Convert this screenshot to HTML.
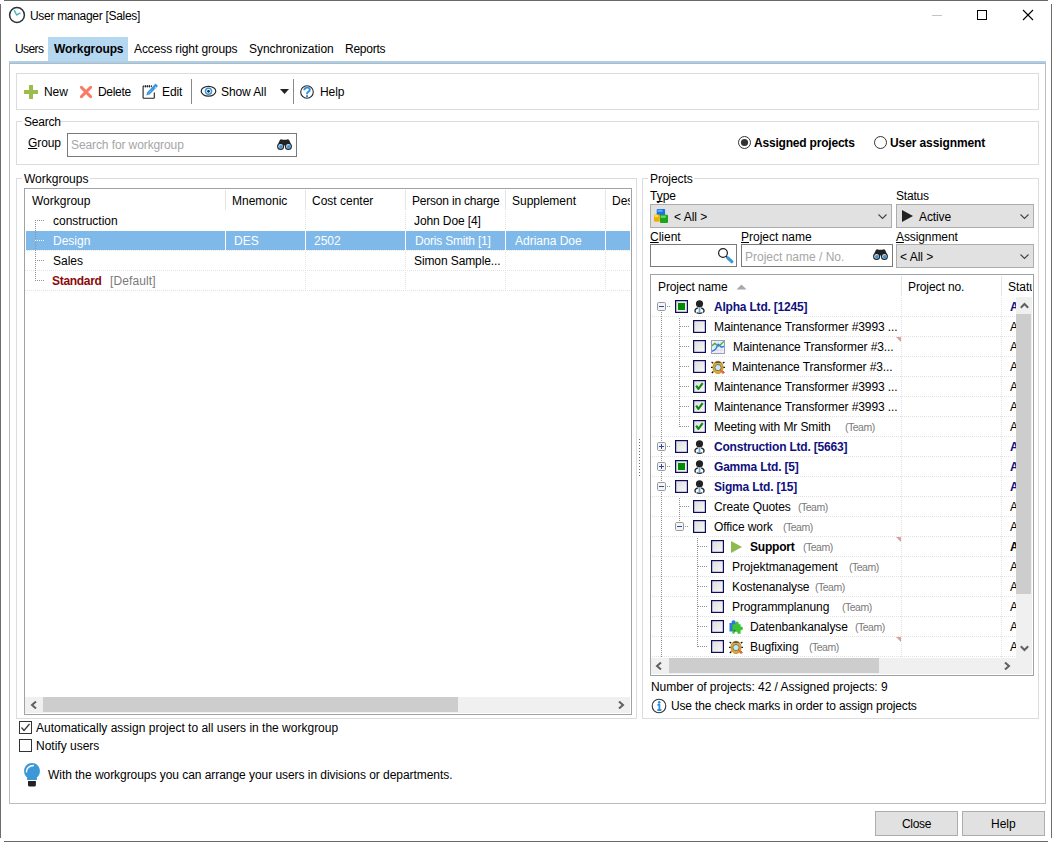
<!DOCTYPE html><html><head><meta charset="utf-8"><style>
html,body{margin:0;padding:0;width:1052px;height:842px;overflow:hidden;background:#fff;}
.t{position:absolute;font-family:"Liberation Sans",sans-serif;font-size:12px;line-height:14px;white-space:nowrap;color:#000;}
.b{font-weight:bold;}
.u{text-decoration:underline;text-decoration-skip-ink:none;}
</style></head><body>
<div style="position:absolute;left:4px;top:0px;width:1044px;height:1px;background:#686868"></div>
<div style="position:absolute;left:0px;top:4px;width:1px;height:834px;background:#6c6c6c"></div>
<div style="position:absolute;left:1051px;top:4px;width:1px;height:834px;background:#6c6c6c"></div>
<div style="position:absolute;left:4px;top:841px;width:1044px;height:1px;background:#686868"></div>
<svg style="position:absolute;left:8px;top:6px" width="18" height="18" viewBox="0 0 18 18"><circle cx="9" cy="9" r="7.4" fill="none" stroke="#263238" stroke-width="1.5"/><path d="M6.2 4.2 L8.6 9 L12.4 6.8" fill="none" stroke="#4db6bc" stroke-width="1.5" stroke-linejoin="round"/></svg>
<div class="t" style="left:30px;top:9px;letter-spacing:-0.3px">User manager [Sales]</div>
<div style="position:absolute;left:932px;top:15px;width:10px;height:1px;background:#c4c4c4"></div>
<div style="position:absolute;left:977px;top:10px;width:8px;height:8px;border:1px solid #000"></div>
<svg style="position:absolute;left:1022px;top:9px" width="12" height="12" viewBox="0 0 12 12"><path d="M1 1 L11 11 M11 1 L1 11" stroke="#000" stroke-width="1.1"/></svg>
<div style="position:absolute;left:48px;top:37px;width:80px;height:24px;background:#b5d7f0"></div>
<div style="position:absolute;left:9px;top:61px;width:1037px;height:2px;background:#a8d1ef"></div>
<div class="t" style="left:15px;top:42px;letter-spacing:-0.6px">Users</div>
<div class="t" style="left:54px;top:42px;font-weight:bold;letter-spacing:-0.1px">Workgroups</div>
<div class="t" style="left:134px;top:42px;letter-spacing:-0.1px">Access right groups</div>
<div class="t" style="left:249px;top:42px;letter-spacing:-0.05px">Synchronization</div>
<div class="t" style="left:345px;top:42px;letter-spacing:-0.25px">Reports</div>
<div style="position:absolute;left:9px;top:63px;width:1035px;height:739px;border:1px solid #bcbcbc;border-top-color:#b8b8b8"></div>
<div style="position:absolute;left:16px;top:73px;width:1021px;height:35px;border:1px solid #dcdcdc"></div>
<svg style="position:absolute;left:24px;top:85px" width="14" height="14" viewBox="0 0 14 14"><rect x="5" y="0" width="4" height="14" fill="#9cbc4c"/><rect x="0" y="5" width="14" height="4" fill="#9cbc4c"/></svg>
<div class="t" style="left:44px;top:85px;letter-spacing:-0.1px">New</div>
<svg style="position:absolute;left:79px;top:85px" width="14" height="14" viewBox="0 0 14 14"><path d="M2.4 2.4 L11.6 11.6 M11.6 2.4 L2.4 11.6" stroke="#fb7864" stroke-width="2.9" stroke-linecap="round"/></svg>
<div class="t" style="left:98px;top:85px;letter-spacing:-0.3px">Delete</div>
<svg style="position:absolute;left:142px;top:83px" width="17" height="17" viewBox="0 0 17 17"><path d="M12.3 9.5 V14.7 Q12.3 15.2 11.8 15.2 H1.6 Q1.1 15.2 1.1 14.7 V3.6 Q1.1 3.1 1.6 3.1 H2" fill="none" stroke="#222" stroke-width="1.1"/><ellipse cx="3.3" cy="3.2" rx="0.75" ry="1.3" fill="#222"/><ellipse cx="5.3" cy="3.2" rx="0.75" ry="1.3" fill="#222"/><ellipse cx="7.4" cy="3.2" rx="0.75" ry="1.3" fill="#222"/><ellipse cx="9.4" cy="3.2" rx="0.6" ry="1" fill="#222"/><path d="M4.3 12.5 L7.61 11.55 L16.0 2.99 L13.59 0.61 L5.19 9.17 Z" fill="#3a95dd"/><path d="M12.6 5.2 L14 3.8" stroke="#fff" stroke-width="0.8"/><path d="M6.5 10.3 L10.5 6.2" stroke="#bfe0f7" stroke-width="0.7" stroke-dasharray="1 1"/></svg>
<div class="t" style="left:162px;top:85px;letter-spacing:-0.1px">Edit</div>
<div style="position:absolute;left:191px;top:79px;width:1px;height:25px;background:#8a8a8a"></div>
<svg style="position:absolute;left:200px;top:85px" width="17" height="13" viewBox="0 0 17 13"><ellipse cx="8.5" cy="6.3" rx="7.3" ry="4.9" fill="#fff" stroke="#262626" stroke-width="1.2"/><circle cx="8.5" cy="6.3" r="3.05" fill="none" stroke="#3a95dd" stroke-width="1.5"/><circle cx="8.5" cy="6.3" r="1.35" fill="#222"/></svg>
<div class="t" style="left:221px;top:85px;letter-spacing:-0.1px">Show All</div>
<svg style="position:absolute;left:280px;top:89px" width="9" height="5" viewBox="0 0 9 5"><path d="M0 0 H9 L4.5 5 Z" fill="#222"/></svg>
<div style="position:absolute;left:293px;top:79px;width:1px;height:25px;background:#8a8a8a"></div>
<svg style="position:absolute;left:299px;top:84px" width="16" height="16" viewBox="0 0 16 16"><circle cx="8" cy="8" r="6.3" fill="#fff" stroke="#262626" stroke-width="1.1"/><path d="M5.3 6.3 Q5.3 3.6 8.1 3.6 Q10.8 3.6 10.8 5.7 Q10.8 7.1 9.2 7.9 Q8 8.5 8 10.2" fill="none" stroke="#2f8fdc" stroke-width="1.9"/><rect x="7" y="11.2" width="2" height="2" fill="#2f8fdc"/></svg>
<div class="t" style="left:320px;top:85px;letter-spacing:-0.1px">Help</div>
<div style="position:absolute;left:16px;top:121px;width:1021px;height:42px;border:1px solid #dcdcdc"></div>
<div style="position:absolute;left:22px;top:115px;width:38px;height:12px;background:#fff"></div>
<div class="t" style="left:24px;top:115px;letter-spacing:-0.2px">Search</div>
<div class="t" style="left:28px;top:136px;letter-spacing:-0.1px"><span class="u">G</span>roup</div>
<div style="position:absolute;left:67px;top:133px;width:228px;height:22px;border:1px solid #7a7a7a;background:#fff"></div>
<div class="t" style="left:71px;top:138px;color:#a6a6a6;letter-spacing:-0.1px">Search for workgroup</div>
<svg style="position:absolute;left:277px;top:139px" width="15" height="11" viewBox="0 0 15 11"><path d="M3 0.8 Q4.3 -0.1 5.6 0.8 L9.4 0.8 Q10.7 -0.1 12 0.8 L14.6 6.5 L0.4 6.5 Z" fill="#222"/><circle cx="3.6" cy="7.4" r="3.5" fill="#222"/><circle cx="11.4" cy="7.4" r="3.5" fill="#222"/><circle cx="3.6" cy="7.4" r="2.4" fill="#c4e2f6"/><circle cx="11.4" cy="7.4" r="2.4" fill="#c4e2f6"/><circle cx="3.9" cy="7.7" r="1.8" fill="#3a95dd"/><circle cx="11.7" cy="7.7" r="1.8" fill="#3a95dd"/></svg>
<svg style="position:absolute;left:737px;top:135px" width="15" height="15" viewBox="0 0 15 15"><circle cx="7.5" cy="7.5" r="6" fill="#fff" stroke="#333" stroke-width="1"/><circle cx="7.5" cy="7.5" r="3.6" fill="#333"/></svg>
<div class="t" style="left:754px;top:136px;font-weight:bold;letter-spacing:-0.2px">Assigned projects</div>
<svg style="position:absolute;left:873px;top:135px" width="15" height="15" viewBox="0 0 15 15"><circle cx="7.5" cy="7.5" r="6" fill="#fff" stroke="#333" stroke-width="1"/></svg>
<div class="t" style="left:890px;top:136px;font-weight:bold;letter-spacing:-0.1px">User assignment</div>
<div style="position:absolute;left:16px;top:178px;width:619px;height:539px;border:1px solid #dcdcdc"></div>
<div style="position:absolute;left:22px;top:172px;width:68px;height:12px;background:#fff"></div>
<div class="t" style="left:24px;top:172px;">Workgroups</div>
<div style="position:absolute;left:24px;top:188px;width:606px;height:525px;border:1px solid #9ea2a9"></div>
<div style="position:absolute;left:225px;top:190px;width:1px;height:20px;background:#e5e5e5"></div>
<div style="position:absolute;left:305px;top:190px;width:1px;height:20px;background:#e5e5e5"></div>
<div style="position:absolute;left:405px;top:190px;width:1px;height:20px;background:#e5e5e5"></div>
<div style="position:absolute;left:505px;top:190px;width:1px;height:20px;background:#e5e5e5"></div>
<div style="position:absolute;left:605px;top:190px;width:1px;height:20px;background:#e5e5e5"></div>
<div class="t" style="left:32px;top:194px;">Workgroup</div>
<div class="t" style="left:232px;top:194px;">Mnemonic</div>
<div class="t" style="left:312px;top:194px;">Cost center</div>
<div class="t" style="left:412px;top:194px;letter-spacing:-0.2px">Person in charge</div>
<div class="t" style="left:512px;top:194px;">Supplement</div>
<div style="position:absolute;left:612px;top:194px;width:18px;overflow:hidden;height:16px"><div class="t" style="left:0;top:0">Description</div></div>
<div style="position:absolute;left:25px;top:250px;width:605px;height:1px;background-image:linear-gradient(90deg,#e3e3e3 50%,transparent 50%);background-size:2px 1px"></div>
<div style="position:absolute;left:25px;top:270px;width:605px;height:1px;background-image:linear-gradient(90deg,#e3e3e3 50%,transparent 50%);background-size:2px 1px"></div>
<div style="position:absolute;left:25px;top:290px;width:605px;height:1px;background-image:linear-gradient(90deg,#e3e3e3 50%,transparent 50%);background-size:2px 1px"></div>
<div style="position:absolute;left:305px;top:212px;width:1px;height:79px;background-image:linear-gradient(180deg,#e3e3e3 50%,transparent 50%);background-size:1px 2px"></div>
<div style="position:absolute;left:405px;top:212px;width:1px;height:79px;background-image:linear-gradient(180deg,#e3e3e3 50%,transparent 50%);background-size:1px 2px"></div>
<div style="position:absolute;left:505px;top:212px;width:1px;height:79px;background-image:linear-gradient(180deg,#e3e3e3 50%,transparent 50%);background-size:1px 2px"></div>
<div style="position:absolute;left:605px;top:212px;width:1px;height:79px;background-image:linear-gradient(180deg,#e3e3e3 50%,transparent 50%);background-size:1px 2px"></div>
<div style="position:absolute;left:26px;top:231px;width:604px;height:19px;background:#7eb9ea"></div>
<div style="position:absolute;left:225px;top:231px;width:1px;height:19px;background:#fff"></div>
<div style="position:absolute;left:305px;top:231px;width:1px;height:19px;background:#fff"></div>
<div style="position:absolute;left:405px;top:231px;width:1px;height:19px;background:#fff"></div>
<div style="position:absolute;left:505px;top:231px;width:1px;height:19px;background:#fff"></div>
<div style="position:absolute;left:605px;top:231px;width:1px;height:19px;background:#fff"></div>
<div style="position:absolute;left:35px;top:220px;width:1px;height:61px;background-image:linear-gradient(180deg,#929292 50%,transparent 50%);background-size:1px 2px"></div>
<div style="position:absolute;left:35px;top:220px;width:10px;height:1px;background-image:linear-gradient(90deg,#929292 50%,transparent 50%);background-size:2px 1px"></div>
<div style="position:absolute;left:35px;top:240px;width:10px;height:1px;background-image:linear-gradient(90deg,#fff 50%,transparent 50%);background-size:2px 1px"></div>
<div style="position:absolute;left:35px;top:260px;width:10px;height:1px;background-image:linear-gradient(90deg,#929292 50%,transparent 50%);background-size:2px 1px"></div>
<div style="position:absolute;left:35px;top:280px;width:10px;height:1px;background-image:linear-gradient(90deg,#929292 50%,transparent 50%);background-size:2px 1px"></div>
<div class="t" style="left:53px;top:214px;">construction</div>
<div class="t" style="left:53px;top:234px;color:#fff">Design</div>
<div class="t" style="left:53px;top:254px;">Sales</div>
<div class="t" style="left:52px;top:274px;font-weight:bold;color:#8b0a0a;letter-spacing:-0.3px">Standard</div>
<div class="t" style="left:110px;top:274px;color:#7a7a7a;letter-spacing:0.1px">[Default]</div>
<div class="t" style="left:234px;top:234px;color:#fff">DES</div>
<div class="t" style="left:314px;top:234px;color:#fff">2502</div>
<div class="t" style="left:414px;top:214px;letter-spacing:-0.1px">John Doe [4]</div>
<div class="t" style="left:415px;top:234px;color:#fff;letter-spacing:-0.2px">Doris Smith [1]</div>
<div class="t" style="left:414px;top:254px;letter-spacing:-0.1px">Simon Sample...</div>
<div class="t" style="left:515px;top:234px;color:#fff">Adriana Doe</div>
<div style="position:absolute;left:25px;top:697px;width:605px;height:16px;background:#f0f0f0"></div>
<div style="position:absolute;left:43px;top:697px;width:415px;height:15px;background:#cdcdcd"></div>
<svg style="position:absolute;left:30px;top:701px" width="8" height="8" viewBox="0 0 8 8"><path d="M6 0.5 L2 4 L6 7.5" fill="none" stroke="#606060" stroke-width="2"/></svg>
<svg style="position:absolute;left:617px;top:701px" width="8" height="8" viewBox="0 0 8 8"><path d="M2 0.5 L6 4 L2 7.5" fill="none" stroke="#606060" stroke-width="2"/></svg>
<svg style="position:absolute;left:19px;top:721px" width="13" height="13" viewBox="0 0 13 13"><rect x="0.5" y="0.5" width="12" height="12" fill="#fff" stroke="#333"/><path d="M2.5 6.5 L5 9.5 L10.5 3" fill="none" stroke="#333" stroke-width="1.2"/></svg>
<div class="t" style="left:36px;top:721px;">Automatically assign project to all users in the workgroup</div>
<svg style="position:absolute;left:19px;top:739px" width="13" height="13" viewBox="0 0 13 13"><rect x="0.5" y="0.5" width="12" height="12" fill="#fff" stroke="#333"/></svg>
<div class="t" style="left:36px;top:739px;">Notify users</div>
<svg style="position:absolute;left:23px;top:762px" width="18" height="26" viewBox="0 0 18 26"><path d="M4.1 18 L4.1 15.6 C2.2 14 1.1 11.6 1.1 9 C1.1 4.6 4.6 1.1 9 1.1 C13.4 1.1 16.9 4.6 16.9 9 C16.9 11.6 15.8 14 13.9 15.6 L13.9 18 Z" fill="#3d98d8"/><path d="M3.4 10.4 C3.1 6.6 6 3.4 10.9 3.4" fill="none" stroke="#fff" stroke-width="1.5"/><path d="M5 19 H12.9 V23 Q12.9 24.6 11.3 24.6 H6.6 Q5 24.6 5 23 Z" fill="#222"/></svg>
<div class="t" style="left:48px;top:768px;letter-spacing:-0.05px">With the workgroups you can arrange your users in divisions or departments.</div>
<div style="position:absolute;left:875px;top:811px;width:81px;height:23px;background:#e1e1e1;border:1px solid #adadad"></div>
<div style="position:absolute;left:962px;top:811px;width:81px;height:23px;background:#e1e1e1;border:1px solid #adadad"></div>
<div class="t" style="left:902px;top:817px;letter-spacing:-0.3px">Close</div>
<div class="t" style="left:991px;top:817px;">Help</div>
<div style="position:absolute;left:639px;top:439px;width:1px;height:1px;background:#6c6c6c"></div>
<div style="position:absolute;left:639px;top:442px;width:1px;height:1px;background:#6c6c6c"></div>
<div style="position:absolute;left:639px;top:445px;width:1px;height:1px;background:#6c6c6c"></div>
<div style="position:absolute;left:639px;top:448px;width:1px;height:1px;background:#6c6c6c"></div>
<div style="position:absolute;left:639px;top:451px;width:1px;height:1px;background:#6c6c6c"></div>
<div style="position:absolute;left:639px;top:454px;width:1px;height:1px;background:#6c6c6c"></div>
<div style="position:absolute;left:639px;top:457px;width:1px;height:1px;background:#6c6c6c"></div>
<div style="position:absolute;left:639px;top:460px;width:1px;height:1px;background:#6c6c6c"></div>
<div style="position:absolute;left:639px;top:463px;width:1px;height:1px;background:#6c6c6c"></div>
<div style="position:absolute;left:639px;top:466px;width:1px;height:1px;background:#6c6c6c"></div>
<div style="position:absolute;left:639px;top:469px;width:1px;height:1px;background:#6c6c6c"></div>
<div style="position:absolute;left:639px;top:472px;width:1px;height:1px;background:#6c6c6c"></div>
<div style="position:absolute;left:639px;top:475px;width:1px;height:1px;background:#6c6c6c"></div>
<div style="position:absolute;left:642px;top:178px;width:395px;height:539px;border:1px solid #dcdcdc"></div>
<div style="position:absolute;left:648px;top:172px;width:46px;height:12px;background:#fff"></div>
<div class="t" style="left:650px;top:172px;letter-spacing:-0.1px">Projects</div>
<div class="t" style="left:650px;top:189px;">T<span class="u">y</span>pe</div>
<div class="t" style="left:896px;top:189px;letter-spacing:-0.2px">Status</div>
<div style="position:absolute;left:650px;top:204px;width:240px;height:22px;background:#e1e1e1;border:1px solid #adadad"></div>
<svg style="position:absolute;left:878px;top:214px" width="9" height="6" viewBox="0 0 9 6"><path d="M0.5 0.5 L4.5 4.5 L8.5 0.5" fill="none" stroke="#444" stroke-width="1.1"/></svg>
<svg style="position:absolute;left:653px;top:208px" width="17" height="16" viewBox="0 0 17 16"><rect x="3.7" y="1" width="8.4" height="6.8" rx="1" fill="#1c74e4"/><rect x="4.5" y="1.8" width="5" height="2" fill="#5fb0ff"/><rect x="1" y="6.4" width="5.8" height="7.4" rx="1" fill="#eeb000"/><rect x="1.6" y="7" width="3.5" height="2.2" fill="#ffe24a"/><rect x="7" y="6.8" width="8" height="8.2" rx="1" fill="#1ca51c"/><rect x="7.8" y="7.6" width="5" height="2.2" fill="#72dc50"/></svg>
<div class="t" style="left:674px;top:210px;">&lt; All &gt;</div>
<div style="position:absolute;left:896px;top:204px;width:136px;height:22px;background:#e1e1e1;border:1px solid #adadad"></div>
<svg style="position:absolute;left:1020px;top:214px" width="9" height="6" viewBox="0 0 9 6"><path d="M0.5 0.5 L4.5 4.5 L8.5 0.5" fill="none" stroke="#444" stroke-width="1.1"/></svg>
<svg style="position:absolute;left:902px;top:210px" width="12" height="12" viewBox="0 0 12 12"><path d="M0 0 L11 6 L0 12 Z" fill="#222"/></svg>
<div class="t" style="left:919px;top:210px;letter-spacing:-0.1px">Active</div>
<div class="t" style="left:650px;top:230px;"><span class="u">C</span>lient</div>
<div style="position:absolute;left:650px;top:244px;width:85px;height:21px;border:1px solid #7a7a7a;background:#fff"></div>
<svg style="position:absolute;left:717px;top:247px" width="17" height="17" viewBox="0 0 17 17"><circle cx="6" cy="6" r="4.4" fill="none" stroke="#222" stroke-width="1.2"/><path d="M9 9.2 L10.8 11" stroke="#222" stroke-width="1.4"/><path d="M10.8 11 L14.8 14.6" stroke="#3a9ad9" stroke-width="3.2" stroke-linecap="round"/></svg>
<div class="t" style="left:741px;top:230px;"><span class="u">P</span>roject name</div>
<div style="position:absolute;left:741px;top:244px;width:150px;height:21px;border:1px solid #7a7a7a;background:#fff"></div>
<div class="t" style="left:745px;top:250px;color:#a6a6a6">Project name / No.</div>
<svg style="position:absolute;left:873px;top:249px" width="15" height="11" viewBox="0 0 15 11"><path d="M3 0.8 Q4.3 -0.1 5.6 0.8 L9.4 0.8 Q10.7 -0.1 12 0.8 L14.6 6.5 L0.4 6.5 Z" fill="#222"/><circle cx="3.6" cy="7.4" r="3.5" fill="#222"/><circle cx="11.4" cy="7.4" r="3.5" fill="#222"/><circle cx="3.6" cy="7.4" r="2.4" fill="#c4e2f6"/><circle cx="11.4" cy="7.4" r="2.4" fill="#c4e2f6"/><circle cx="3.9" cy="7.7" r="1.8" fill="#3a95dd"/><circle cx="11.7" cy="7.7" r="1.8" fill="#3a95dd"/></svg>
<div class="t" style="left:896px;top:230px;letter-spacing:-0.1px"><span class="u">A</span>ssignment</div>
<div style="position:absolute;left:896px;top:244px;width:136px;height:22px;background:#e1e1e1;border:1px solid #adadad"></div>
<svg style="position:absolute;left:1020px;top:254px" width="9" height="6" viewBox="0 0 9 6"><path d="M0.5 0.5 L4.5 4.5 L8.5 0.5" fill="none" stroke="#444" stroke-width="1.1"/></svg>
<div class="t" style="left:900px;top:250px;">&lt; All &gt;</div>
<div style="position:absolute;left:650px;top:274px;width:382px;height:400px;border:1px solid #9ea2a9"></div>
<div style="position:absolute;left:901px;top:276px;width:1px;height:20px;background:#e5e5e5"></div>
<div style="position:absolute;left:1001px;top:276px;width:1px;height:20px;background:#e5e5e5"></div>
<div class="t" style="left:658px;top:280px;letter-spacing:-0.1px">Project name</div>
<svg style="position:absolute;left:736px;top:284px" width="11" height="6" viewBox="0 0 11 6"><path d="M0.5 5.5 L5.5 0.5 L10.5 5.5 Z" fill="#a8a8a8"/></svg>
<div class="t" style="left:908px;top:280px;letter-spacing:-0.1px">Project no.</div>
<div style="position:absolute;left:1008px;top:280px;width:24px;height:16px;overflow:hidden"><div class="t" style="left:0;top:0">Status</div></div>
<div style="position:absolute;left:651px;top:297px;width:365px;height:361px;overflow:hidden">
<div style="position:absolute;left:1px;top:19px;width:364px;height:1px;background-image:linear-gradient(90deg,#e2e2e2 50%,transparent 50%);background-size:2px 1px"></div>
<div style="position:absolute;left:1px;top:39px;width:364px;height:1px;background-image:linear-gradient(90deg,#e2e2e2 50%,transparent 50%);background-size:2px 1px"></div>
<div style="position:absolute;left:1px;top:59px;width:364px;height:1px;background-image:linear-gradient(90deg,#e2e2e2 50%,transparent 50%);background-size:2px 1px"></div>
<div style="position:absolute;left:1px;top:79px;width:364px;height:1px;background-image:linear-gradient(90deg,#e2e2e2 50%,transparent 50%);background-size:2px 1px"></div>
<div style="position:absolute;left:1px;top:99px;width:364px;height:1px;background-image:linear-gradient(90deg,#e2e2e2 50%,transparent 50%);background-size:2px 1px"></div>
<div style="position:absolute;left:1px;top:119px;width:364px;height:1px;background-image:linear-gradient(90deg,#e2e2e2 50%,transparent 50%);background-size:2px 1px"></div>
<div style="position:absolute;left:1px;top:139px;width:364px;height:1px;background-image:linear-gradient(90deg,#e2e2e2 50%,transparent 50%);background-size:2px 1px"></div>
<div style="position:absolute;left:1px;top:159px;width:364px;height:1px;background-image:linear-gradient(90deg,#e2e2e2 50%,transparent 50%);background-size:2px 1px"></div>
<div style="position:absolute;left:1px;top:179px;width:364px;height:1px;background-image:linear-gradient(90deg,#e2e2e2 50%,transparent 50%);background-size:2px 1px"></div>
<div style="position:absolute;left:1px;top:199px;width:364px;height:1px;background-image:linear-gradient(90deg,#e2e2e2 50%,transparent 50%);background-size:2px 1px"></div>
<div style="position:absolute;left:1px;top:219px;width:364px;height:1px;background-image:linear-gradient(90deg,#e2e2e2 50%,transparent 50%);background-size:2px 1px"></div>
<div style="position:absolute;left:1px;top:239px;width:364px;height:1px;background-image:linear-gradient(90deg,#e2e2e2 50%,transparent 50%);background-size:2px 1px"></div>
<div style="position:absolute;left:1px;top:259px;width:364px;height:1px;background-image:linear-gradient(90deg,#e2e2e2 50%,transparent 50%);background-size:2px 1px"></div>
<div style="position:absolute;left:1px;top:279px;width:364px;height:1px;background-image:linear-gradient(90deg,#e2e2e2 50%,transparent 50%);background-size:2px 1px"></div>
<div style="position:absolute;left:1px;top:299px;width:364px;height:1px;background-image:linear-gradient(90deg,#e2e2e2 50%,transparent 50%);background-size:2px 1px"></div>
<div style="position:absolute;left:1px;top:319px;width:364px;height:1px;background-image:linear-gradient(90deg,#e2e2e2 50%,transparent 50%);background-size:2px 1px"></div>
<div style="position:absolute;left:1px;top:339px;width:364px;height:1px;background-image:linear-gradient(90deg,#e2e2e2 50%,transparent 50%);background-size:2px 1px"></div>
<div style="position:absolute;left:1px;top:359px;width:364px;height:1px;background-image:linear-gradient(90deg,#e2e2e2 50%,transparent 50%);background-size:2px 1px"></div>
<div style="position:absolute;left:250px;top:1px;width:1px;height:360px;background-image:linear-gradient(180deg,#e2e2e2 50%,transparent 50%);background-size:1px 2px"></div>
<div style="position:absolute;left:350px;top:1px;width:1px;height:360px;background-image:linear-gradient(180deg,#e2e2e2 50%,transparent 50%);background-size:1px 2px"></div>
<div style="position:absolute;left:10px;top:15px;width:1px;height:346px;background-image:linear-gradient(180deg,#929292 50%,transparent 50%);background-size:1px 2px"></div>
<div style="position:absolute;left:28px;top:21px;width:1px;height:109px;background-image:linear-gradient(180deg,#929292 50%,transparent 50%);background-size:1px 2px"></div>
<div style="position:absolute;left:28px;top:201px;width:1px;height:25px;background-image:linear-gradient(180deg,#929292 50%,transparent 50%);background-size:1px 2px"></div>
<div style="position:absolute;left:46px;top:241px;width:1px;height:110px;background-image:linear-gradient(180deg,#929292 50%,transparent 50%);background-size:1px 2px"></div>
<div style="position:absolute;left:16px;top:9px;width:4px;height:1px;background-image:linear-gradient(90deg,#929292 50%,transparent 50%);background-size:2px 1px"></div>
<svg style="position:absolute;left:6px;top:5px" width="9" height="9" viewBox="0 0 9 9"><rect x="0.5" y="0.5" width="8" height="8" rx="1.2" fill="#f4f4f4" stroke="#9a9a9a"/><path d="M2 4.5 H7" stroke="#3049a8" stroke-width="1"/></svg>
<svg style="position:absolute;left:24px;top:3px" width="13" height="13" viewBox="0 0 13 13"><defs><linearGradient id="cg" x1="0" y1="0" x2="1" y2="1"><stop offset="0" stop-color="#dcdcdc"/><stop offset="1" stop-color="#fafafa"/></linearGradient></defs><rect x="0.6" y="0.6" width="11.8" height="11.8" fill="url(#cg)" stroke="#0c0c5a" stroke-width="1.2"/><rect x="3" y="3" width="7" height="7" fill="#008a00"/></svg>
<svg style="position:absolute;left:43px;top:3px" width="11" height="14" viewBox="0 0 11 14"><circle cx="5.5" cy="3.8" r="3.6" fill="#222"/><path d="M1.8 12.5 C0 10.5 1.5 8.3 3.8 8 M9.2 12.5 C11 10.5 9.5 8.3 7.2 8" fill="none" stroke="#222" stroke-width="1.3"/><path d="M2.5 12.8 Q5.5 13.8 8.5 12.8" fill="none" stroke="#222" stroke-width="1.2"/><rect x="4.6" y="8" width="1.8" height="5" fill="#5aa9e6"/></svg>
<div class="t" style="left:63px;top:3px;font-weight:bold;color:#10107e;letter-spacing:-0.2px">Alpha Ltd. [1245]</div>
<div class="t" style="left:359px;top:3px;font-weight:bold;color:#10107e">Active</div>
<div style="position:absolute;left:29px;top:29px;width:10px;height:1px;background-image:linear-gradient(90deg,#929292 50%,transparent 50%);background-size:2px 1px"></div>
<svg style="position:absolute;left:42px;top:23px" width="13" height="13" viewBox="0 0 13 13"><defs><linearGradient id="cg" x1="0" y1="0" x2="1" y2="1"><stop offset="0" stop-color="#dcdcdc"/><stop offset="1" stop-color="#fafafa"/></linearGradient></defs><rect x="0.6" y="0.6" width="11.8" height="11.8" fill="url(#cg)" stroke="#0c0c5a" stroke-width="1.2"/></svg>
<div class="t" style="left:63px;top:23px;letter-spacing:-0.1px">Maintenance Transformer #3993 ...</div>
<div class="t" style="left:359px;top:23px;">Active</div>
<div style="position:absolute;left:29px;top:49px;width:10px;height:1px;background-image:linear-gradient(90deg,#929292 50%,transparent 50%);background-size:2px 1px"></div>
<svg style="position:absolute;left:42px;top:43px" width="13" height="13" viewBox="0 0 13 13"><defs><linearGradient id="cg" x1="0" y1="0" x2="1" y2="1"><stop offset="0" stop-color="#dcdcdc"/><stop offset="1" stop-color="#fafafa"/></linearGradient></defs><rect x="0.6" y="0.6" width="11.8" height="11.8" fill="url(#cg)" stroke="#0c0c5a" stroke-width="1.2"/></svg>
<svg style="position:absolute;left:60px;top:43px" width="14" height="14" viewBox="0 0 14 14"><rect x="0.5" y="0.5" width="13" height="13" fill="#f3f2fb" stroke="#9c9cbc" stroke-width="1"/><path d="M4 1 V13 M7 1 V13 M10 1 V13 M1 4 H13 M1 7 H13 M1 10 H13" stroke="#d4d4e8" stroke-width="0.7"/><path d="M1 5.8 L3.9 3.4 L7.2 6.2 L9.6 4.6 L12.9 1.4" fill="none" stroke="#2fb52f" stroke-width="1.3"/><path d="M1 11.4 L4.6 9.4 L7.2 4.2 L10.5 7.2 L13 6.3" fill="none" stroke="#2a78e0" stroke-width="1.3"/></svg>
<div class="t" style="left:82px;top:43px;letter-spacing:-0.1px">Maintenance Transformer #3...</div>
<div class="t" style="left:359px;top:43px;">Active</div>
<div style="position:absolute;left:29px;top:69px;width:10px;height:1px;background-image:linear-gradient(90deg,#929292 50%,transparent 50%);background-size:2px 1px"></div>
<svg style="position:absolute;left:42px;top:63px" width="13" height="13" viewBox="0 0 13 13"><defs><linearGradient id="cg" x1="0" y1="0" x2="1" y2="1"><stop offset="0" stop-color="#dcdcdc"/><stop offset="1" stop-color="#fafafa"/></linearGradient></defs><rect x="0.6" y="0.6" width="11.8" height="11.8" fill="url(#cg)" stroke="#0c0c5a" stroke-width="1.2"/></svg>
<svg style="position:absolute;left:60px;top:63px" width="14" height="14" viewBox="0 0 14 14"><path d="M2.2 3.2 L0.6 2 M1.8 7.4 L0 7.4 M2.4 11.6 L0.8 13 M11.8 3.2 L13.4 2 M12.2 7.4 L14 7.4 M11.6 11.6 L13.2 13" stroke="#111" stroke-width="1.3"/><ellipse cx="7" cy="7.4" rx="5.1" ry="6.2" fill="#e6ad1e" stroke="#b07a10" stroke-width="0.7"/><path d="M3.2 3 Q7 -0.6 10.8 3 Z" fill="#555"/><circle cx="7" cy="7.6" r="3.1" fill="#c2e8fb" stroke="#6a6a6a" stroke-width="0.9"/><path d="M9.6 10.2 L12.6 13.2" stroke="#f06a2a" stroke-width="2.2"/></svg>
<div class="t" style="left:81px;top:63px;letter-spacing:-0.1px">Maintenance Transformer #3...</div>
<div class="t" style="left:359px;top:63px;">Active</div>
<div style="position:absolute;left:29px;top:89px;width:10px;height:1px;background-image:linear-gradient(90deg,#929292 50%,transparent 50%);background-size:2px 1px"></div>
<svg style="position:absolute;left:42px;top:83px" width="13" height="13" viewBox="0 0 13 13"><defs><linearGradient id="cg" x1="0" y1="0" x2="1" y2="1"><stop offset="0" stop-color="#dcdcdc"/><stop offset="1" stop-color="#fafafa"/></linearGradient></defs><rect x="0.6" y="0.6" width="11.8" height="11.8" fill="url(#cg)" stroke="#0c0c5a" stroke-width="1.2"/><path d="M3.2 5.6 L5.4 8.9 L9.7 3.2" fill="none" stroke="#0a8c0a" stroke-width="2.1" stroke-linejoin="round"/></svg>
<div class="t" style="left:63px;top:83px;letter-spacing:-0.1px">Maintenance Transformer #3993 ...</div>
<div class="t" style="left:359px;top:83px;">Active</div>
<div style="position:absolute;left:29px;top:109px;width:10px;height:1px;background-image:linear-gradient(90deg,#929292 50%,transparent 50%);background-size:2px 1px"></div>
<svg style="position:absolute;left:42px;top:103px" width="13" height="13" viewBox="0 0 13 13"><defs><linearGradient id="cg" x1="0" y1="0" x2="1" y2="1"><stop offset="0" stop-color="#dcdcdc"/><stop offset="1" stop-color="#fafafa"/></linearGradient></defs><rect x="0.6" y="0.6" width="11.8" height="11.8" fill="url(#cg)" stroke="#0c0c5a" stroke-width="1.2"/><path d="M3.2 5.6 L5.4 8.9 L9.7 3.2" fill="none" stroke="#0a8c0a" stroke-width="2.1" stroke-linejoin="round"/></svg>
<div class="t" style="left:63px;top:103px;letter-spacing:-0.1px">Maintenance Transformer #3993 ...</div>
<div class="t" style="left:359px;top:103px;">Active</div>
<div style="position:absolute;left:29px;top:129px;width:10px;height:1px;background-image:linear-gradient(90deg,#929292 50%,transparent 50%);background-size:2px 1px"></div>
<svg style="position:absolute;left:42px;top:123px" width="13" height="13" viewBox="0 0 13 13"><defs><linearGradient id="cg" x1="0" y1="0" x2="1" y2="1"><stop offset="0" stop-color="#dcdcdc"/><stop offset="1" stop-color="#fafafa"/></linearGradient></defs><rect x="0.6" y="0.6" width="11.8" height="11.8" fill="url(#cg)" stroke="#0c0c5a" stroke-width="1.2"/><path d="M3.2 5.6 L5.4 8.9 L9.7 3.2" fill="none" stroke="#0a8c0a" stroke-width="2.1" stroke-linejoin="round"/></svg>
<div class="t" style="left:63px;top:123px;letter-spacing:-0.1px">Meeting with Mr Smith</div>
<div class="t" style="left:359px;top:123px;">Active</div>
<div class="t" style="left:194px;top:123px;color:#7a7a7a;font-size:10.5px;letter-spacing:-0.5px">(Team)</div>
<div style="position:absolute;left:16px;top:149px;width:4px;height:1px;background-image:linear-gradient(90deg,#929292 50%,transparent 50%);background-size:2px 1px"></div>
<svg style="position:absolute;left:6px;top:145px" width="9" height="9" viewBox="0 0 9 9"><rect x="0.5" y="0.5" width="8" height="8" rx="1.2" fill="#f4f4f4" stroke="#9a9a9a"/><path d="M2 4.5 H7" stroke="#3049a8" stroke-width="1"/><path d="M4.5 2 V7" stroke="#3049a8" stroke-width="1"/></svg>
<svg style="position:absolute;left:24px;top:143px" width="13" height="13" viewBox="0 0 13 13"><defs><linearGradient id="cg" x1="0" y1="0" x2="1" y2="1"><stop offset="0" stop-color="#dcdcdc"/><stop offset="1" stop-color="#fafafa"/></linearGradient></defs><rect x="0.6" y="0.6" width="11.8" height="11.8" fill="url(#cg)" stroke="#0c0c5a" stroke-width="1.2"/></svg>
<svg style="position:absolute;left:43px;top:143px" width="11" height="14" viewBox="0 0 11 14"><circle cx="5.5" cy="3.8" r="3.6" fill="#222"/><path d="M1.8 12.5 C0 10.5 1.5 8.3 3.8 8 M9.2 12.5 C11 10.5 9.5 8.3 7.2 8" fill="none" stroke="#222" stroke-width="1.3"/><path d="M2.5 12.8 Q5.5 13.8 8.5 12.8" fill="none" stroke="#222" stroke-width="1.2"/><rect x="4.6" y="8" width="1.8" height="5" fill="#5aa9e6"/></svg>
<div class="t" style="left:63px;top:143px;font-weight:bold;color:#10107e;letter-spacing:-0.2px">Construction Ltd. [5663]</div>
<div class="t" style="left:359px;top:143px;font-weight:bold;color:#10107e">Active</div>
<div style="position:absolute;left:16px;top:169px;width:4px;height:1px;background-image:linear-gradient(90deg,#929292 50%,transparent 50%);background-size:2px 1px"></div>
<svg style="position:absolute;left:6px;top:165px" width="9" height="9" viewBox="0 0 9 9"><rect x="0.5" y="0.5" width="8" height="8" rx="1.2" fill="#f4f4f4" stroke="#9a9a9a"/><path d="M2 4.5 H7" stroke="#3049a8" stroke-width="1"/><path d="M4.5 2 V7" stroke="#3049a8" stroke-width="1"/></svg>
<svg style="position:absolute;left:24px;top:163px" width="13" height="13" viewBox="0 0 13 13"><defs><linearGradient id="cg" x1="0" y1="0" x2="1" y2="1"><stop offset="0" stop-color="#dcdcdc"/><stop offset="1" stop-color="#fafafa"/></linearGradient></defs><rect x="0.6" y="0.6" width="11.8" height="11.8" fill="url(#cg)" stroke="#0c0c5a" stroke-width="1.2"/><rect x="3" y="3" width="7" height="7" fill="#008a00"/></svg>
<svg style="position:absolute;left:43px;top:163px" width="11" height="14" viewBox="0 0 11 14"><circle cx="5.5" cy="3.8" r="3.6" fill="#222"/><path d="M1.8 12.5 C0 10.5 1.5 8.3 3.8 8 M9.2 12.5 C11 10.5 9.5 8.3 7.2 8" fill="none" stroke="#222" stroke-width="1.3"/><path d="M2.5 12.8 Q5.5 13.8 8.5 12.8" fill="none" stroke="#222" stroke-width="1.2"/><rect x="4.6" y="8" width="1.8" height="5" fill="#5aa9e6"/></svg>
<div class="t" style="left:63px;top:163px;font-weight:bold;color:#10107e;letter-spacing:-0.2px">Gamma Ltd. [5]</div>
<div class="t" style="left:359px;top:163px;font-weight:bold;color:#10107e">Active</div>
<div style="position:absolute;left:16px;top:189px;width:4px;height:1px;background-image:linear-gradient(90deg,#929292 50%,transparent 50%);background-size:2px 1px"></div>
<svg style="position:absolute;left:6px;top:185px" width="9" height="9" viewBox="0 0 9 9"><rect x="0.5" y="0.5" width="8" height="8" rx="1.2" fill="#f4f4f4" stroke="#9a9a9a"/><path d="M2 4.5 H7" stroke="#3049a8" stroke-width="1"/></svg>
<svg style="position:absolute;left:24px;top:183px" width="13" height="13" viewBox="0 0 13 13"><defs><linearGradient id="cg" x1="0" y1="0" x2="1" y2="1"><stop offset="0" stop-color="#dcdcdc"/><stop offset="1" stop-color="#fafafa"/></linearGradient></defs><rect x="0.6" y="0.6" width="11.8" height="11.8" fill="url(#cg)" stroke="#0c0c5a" stroke-width="1.2"/></svg>
<svg style="position:absolute;left:43px;top:183px" width="11" height="14" viewBox="0 0 11 14"><circle cx="5.5" cy="3.8" r="3.6" fill="#222"/><path d="M1.8 12.5 C0 10.5 1.5 8.3 3.8 8 M9.2 12.5 C11 10.5 9.5 8.3 7.2 8" fill="none" stroke="#222" stroke-width="1.3"/><path d="M2.5 12.8 Q5.5 13.8 8.5 12.8" fill="none" stroke="#222" stroke-width="1.2"/><rect x="4.6" y="8" width="1.8" height="5" fill="#5aa9e6"/></svg>
<div class="t" style="left:63px;top:183px;font-weight:bold;color:#10107e;letter-spacing:-0.2px">Sigma Ltd. [15]</div>
<div class="t" style="left:359px;top:183px;font-weight:bold;color:#10107e">Active</div>
<div style="position:absolute;left:29px;top:209px;width:10px;height:1px;background-image:linear-gradient(90deg,#929292 50%,transparent 50%);background-size:2px 1px"></div>
<svg style="position:absolute;left:42px;top:203px" width="13" height="13" viewBox="0 0 13 13"><defs><linearGradient id="cg" x1="0" y1="0" x2="1" y2="1"><stop offset="0" stop-color="#dcdcdc"/><stop offset="1" stop-color="#fafafa"/></linearGradient></defs><rect x="0.6" y="0.6" width="11.8" height="11.8" fill="url(#cg)" stroke="#0c0c5a" stroke-width="1.2"/></svg>
<div class="t" style="left:63px;top:203px;letter-spacing:-0.1px">Create Quotes</div>
<div class="t" style="left:359px;top:203px;">Active</div>
<div class="t" style="left:147px;top:203px;color:#7a7a7a;font-size:10.5px;letter-spacing:-0.5px">(Team)</div>
<svg style="position:absolute;left:24px;top:225px" width="9" height="9" viewBox="0 0 9 9"><rect x="0.5" y="0.5" width="8" height="8" rx="1.2" fill="#f4f4f4" stroke="#9a9a9a"/><path d="M2 4.5 H7" stroke="#3049a8" stroke-width="1"/></svg>
<div style="position:absolute;left:34px;top:229px;width:4px;height:1px;background-image:linear-gradient(90deg,#929292 50%,transparent 50%);background-size:2px 1px"></div>
<svg style="position:absolute;left:42px;top:223px" width="13" height="13" viewBox="0 0 13 13"><defs><linearGradient id="cg" x1="0" y1="0" x2="1" y2="1"><stop offset="0" stop-color="#dcdcdc"/><stop offset="1" stop-color="#fafafa"/></linearGradient></defs><rect x="0.6" y="0.6" width="11.8" height="11.8" fill="url(#cg)" stroke="#0c0c5a" stroke-width="1.2"/></svg>
<div class="t" style="left:63px;top:223px;letter-spacing:-0.1px">Office work</div>
<div class="t" style="left:359px;top:223px;">Active</div>
<div class="t" style="left:132px;top:223px;color:#7a7a7a;font-size:10.5px;letter-spacing:-0.5px">(Team)</div>
<div style="position:absolute;left:47px;top:249px;width:10px;height:1px;background-image:linear-gradient(90deg,#929292 50%,transparent 50%);background-size:2px 1px"></div>
<svg style="position:absolute;left:60px;top:243px" width="13" height="13" viewBox="0 0 13 13"><defs><linearGradient id="cg" x1="0" y1="0" x2="1" y2="1"><stop offset="0" stop-color="#dcdcdc"/><stop offset="1" stop-color="#fafafa"/></linearGradient></defs><rect x="0.6" y="0.6" width="11.8" height="11.8" fill="url(#cg)" stroke="#0c0c5a" stroke-width="1.2"/></svg>
<svg style="position:absolute;left:80px;top:244px" width="12" height="12" viewBox="0 0 12 12"><path d="M0 0 L11 6 L0 12 Z" fill="#8dbb4d"/></svg>
<div class="t" style="left:99px;top:243px;font-weight:bold;letter-spacing:-0.2px">Support</div>
<div class="t" style="left:359px;top:243px;font-weight:bold">Active</div>
<div class="t" style="left:152px;top:243px;color:#7a7a7a;font-size:10.5px;letter-spacing:-0.5px">(Team)</div>
<div style="position:absolute;left:47px;top:269px;width:10px;height:1px;background-image:linear-gradient(90deg,#929292 50%,transparent 50%);background-size:2px 1px"></div>
<svg style="position:absolute;left:60px;top:263px" width="13" height="13" viewBox="0 0 13 13"><defs><linearGradient id="cg" x1="0" y1="0" x2="1" y2="1"><stop offset="0" stop-color="#dcdcdc"/><stop offset="1" stop-color="#fafafa"/></linearGradient></defs><rect x="0.6" y="0.6" width="11.8" height="11.8" fill="url(#cg)" stroke="#0c0c5a" stroke-width="1.2"/></svg>
<div class="t" style="left:81px;top:263px;letter-spacing:-0.1px">Projektmanagement</div>
<div class="t" style="left:359px;top:263px;">Active</div>
<div class="t" style="left:198px;top:263px;color:#7a7a7a;font-size:10.5px;letter-spacing:-0.5px">(Team)</div>
<div style="position:absolute;left:47px;top:289px;width:10px;height:1px;background-image:linear-gradient(90deg,#929292 50%,transparent 50%);background-size:2px 1px"></div>
<svg style="position:absolute;left:60px;top:283px" width="13" height="13" viewBox="0 0 13 13"><defs><linearGradient id="cg" x1="0" y1="0" x2="1" y2="1"><stop offset="0" stop-color="#dcdcdc"/><stop offset="1" stop-color="#fafafa"/></linearGradient></defs><rect x="0.6" y="0.6" width="11.8" height="11.8" fill="url(#cg)" stroke="#0c0c5a" stroke-width="1.2"/></svg>
<div class="t" style="left:81px;top:283px;letter-spacing:-0.1px">Kostenanalyse</div>
<div class="t" style="left:359px;top:283px;">Active</div>
<div class="t" style="left:164px;top:283px;color:#7a7a7a;font-size:10.5px;letter-spacing:-0.5px">(Team)</div>
<div style="position:absolute;left:47px;top:309px;width:10px;height:1px;background-image:linear-gradient(90deg,#929292 50%,transparent 50%);background-size:2px 1px"></div>
<svg style="position:absolute;left:60px;top:303px" width="13" height="13" viewBox="0 0 13 13"><defs><linearGradient id="cg" x1="0" y1="0" x2="1" y2="1"><stop offset="0" stop-color="#dcdcdc"/><stop offset="1" stop-color="#fafafa"/></linearGradient></defs><rect x="0.6" y="0.6" width="11.8" height="11.8" fill="url(#cg)" stroke="#0c0c5a" stroke-width="1.2"/></svg>
<div class="t" style="left:81px;top:303px;letter-spacing:-0.1px">Programmplanung</div>
<div class="t" style="left:359px;top:303px;">Active</div>
<div class="t" style="left:191px;top:303px;color:#7a7a7a;font-size:10.5px;letter-spacing:-0.5px">(Team)</div>
<div style="position:absolute;left:47px;top:329px;width:10px;height:1px;background-image:linear-gradient(90deg,#929292 50%,transparent 50%);background-size:2px 1px"></div>
<svg style="position:absolute;left:60px;top:323px" width="13" height="13" viewBox="0 0 13 13"><defs><linearGradient id="cg" x1="0" y1="0" x2="1" y2="1"><stop offset="0" stop-color="#dcdcdc"/><stop offset="1" stop-color="#fafafa"/></linearGradient></defs><rect x="0.6" y="0.6" width="11.8" height="11.8" fill="url(#cg)" stroke="#0c0c5a" stroke-width="1.2"/></svg>
<svg style="position:absolute;left:78px;top:323px" width="14" height="14" viewBox="0 0 14 14"><path d="M0.5 3 H2.6 Q2.4 0.2 4.6 0.2 Q6.8 0.2 6.6 3 H7.4 V11.4 H0.5 Z" fill="#2a78e0"/><path d="M3.4 4.2 H6.2 Q6 1.6 8 1.6 Q10 1.6 9.8 4.2 H11.6 V6.6 Q14 6.4 14 8.4 Q14 10.4 11.6 10.2 V13.8 H8.6 Q8.8 11.6 7 11.6 Q5.2 11.6 5.4 13.8 H3.4 Z" fill="#3cc232"/><path d="M4.4 9.5 L6.4 10.4 L5.4 11.6 Z" fill="#1a3fb0"/></svg>
<div class="t" style="left:99px;top:323px;letter-spacing:-0.1px">Datenbankanalyse</div>
<div class="t" style="left:359px;top:323px;">Active</div>
<div class="t" style="left:204px;top:323px;color:#7a7a7a;font-size:10.5px;letter-spacing:-0.5px">(Team)</div>
<div style="position:absolute;left:47px;top:349px;width:10px;height:1px;background-image:linear-gradient(90deg,#929292 50%,transparent 50%);background-size:2px 1px"></div>
<svg style="position:absolute;left:60px;top:343px" width="13" height="13" viewBox="0 0 13 13"><defs><linearGradient id="cg" x1="0" y1="0" x2="1" y2="1"><stop offset="0" stop-color="#dcdcdc"/><stop offset="1" stop-color="#fafafa"/></linearGradient></defs><rect x="0.6" y="0.6" width="11.8" height="11.8" fill="url(#cg)" stroke="#0c0c5a" stroke-width="1.2"/></svg>
<svg style="position:absolute;left:78px;top:343px" width="14" height="14" viewBox="0 0 14 14"><path d="M2.2 3.2 L0.6 2 M1.8 7.4 L0 7.4 M2.4 11.6 L0.8 13 M11.8 3.2 L13.4 2 M12.2 7.4 L14 7.4 M11.6 11.6 L13.2 13" stroke="#111" stroke-width="1.3"/><ellipse cx="7" cy="7.4" rx="5.1" ry="6.2" fill="#e6ad1e" stroke="#b07a10" stroke-width="0.7"/><path d="M3.2 3 Q7 -0.6 10.8 3 Z" fill="#555"/><circle cx="7" cy="7.6" r="3.1" fill="#c2e8fb" stroke="#6a6a6a" stroke-width="0.9"/><path d="M9.6 10.2 L12.6 13.2" stroke="#f06a2a" stroke-width="2.2"/></svg>
<div class="t" style="left:99px;top:343px;letter-spacing:-0.1px">Bugfixing</div>
<div class="t" style="left:359px;top:343px;">Active</div>
<div class="t" style="left:158px;top:343px;color:#7a7a7a;font-size:10.5px;letter-spacing:-0.5px">(Team)</div>
</div>
<svg style="position:absolute;left:896px;top:337px" width="5" height="5" viewBox="0 0 5 5"><path d="M0 0 H5 V5 Z" fill="#d9a0a0"/></svg>
<svg style="position:absolute;left:896px;top:537px" width="5" height="5" viewBox="0 0 5 5"><path d="M0 0 H5 V5 Z" fill="#d9a0a0"/></svg>
<svg style="position:absolute;left:896px;top:637px" width="5" height="5" viewBox="0 0 5 5"><path d="M0 0 H5 V5 Z" fill="#d9a0a0"/></svg>
<div style="position:absolute;left:1016px;top:297px;width:16px;height:361px;background:#f0f0f0"></div>
<div style="position:absolute;left:1016px;top:314px;width:15px;height:280px;background:#cdcdcd"></div>
<svg style="position:absolute;left:1020px;top:302px" width="9" height="7" viewBox="0 0 9 7"><path d="M0.8 5.8 L4.5 2 L8.2 5.8" fill="none" stroke="#606060" stroke-width="2"/></svg>
<svg style="position:absolute;left:1020px;top:645px" width="9" height="7" viewBox="0 0 9 7"><path d="M0.8 1.2 L4.5 5 L8.2 1.2" fill="none" stroke="#606060" stroke-width="2"/></svg>
<div style="position:absolute;left:651px;top:658px;width:381px;height:16px;background:#f0f0f0"></div>
<div style="position:absolute;left:669px;top:658px;width:210px;height:15px;background:#cdcdcd"></div>
<svg style="position:absolute;left:655px;top:662px" width="8" height="8" viewBox="0 0 8 8"><path d="M6 0.5 L2 4 L6 7.5" fill="none" stroke="#606060" stroke-width="2"/></svg>
<svg style="position:absolute;left:1003px;top:662px" width="8" height="8" viewBox="0 0 8 8"><path d="M2 0.5 L6 4 L2 7.5" fill="none" stroke="#606060" stroke-width="2"/></svg>
<div class="t" style="left:651px;top:680px;letter-spacing:-0.05px">Number of projects: 42 / Assigned projects: 9</div>
<svg style="position:absolute;left:651px;top:698px" width="16" height="16" viewBox="0 0 16 16"><circle cx="8" cy="8" r="6.8" fill="#fff" stroke="#333" stroke-width="1.1"/><circle cx="8.2" cy="4.4" r="1.3" fill="#2f8fdc"/><path d="M6.4 6.9 H8.4 V11.8 M6.4 12 H10.4" fill="none" stroke="#2f8fdc" stroke-width="1.8"/></svg>
<div class="t" style="left:671px;top:699px;letter-spacing:-0.15px">Use the check marks in order to assign projects</div>
</body></html>
